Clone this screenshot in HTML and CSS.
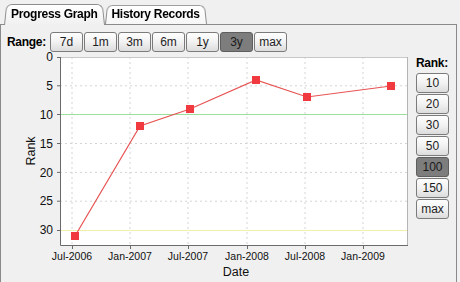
FILE: index.html
```html
<!DOCTYPE html>
<html lang="en">
<head>
  <meta charset="UTF-8">
  <title>Progress Graph</title>
  <link rel="stylesheet" href="styles.css">
</head>
<body>

  <div class="window">
    <!-- Tabs -->
    <div class="tabs">
      <div class="tab active">Progress Graph</div>
      <div class="tab">History Records</div>
    </div>

    <div class="panel">
      <!-- Range selector -->
      <div class="range-row">
        <span class="label">Range:</span>
        <div class="btn-group">
          <button class="btn">7d</button>
          <button class="btn">1m</button>
          <button class="btn">3m</button>
          <button class="btn">6m</button>
          <button class="btn">1y</button>
          <button class="btn on">3y</button>
          <button class="btn">max</button>
        </div>
      </div>

      <div class="main">
        <!-- Chart, drawn in page coordinates -->
        <svg class="chart" width="410" height="234" viewBox="1 48 410 234">
          <rect x="60" y="57" width="348" height="188" fill="#fff"/>

          <g class="grid">
            <line x1="60" y1="85.8" x2="408" y2="85.8"/>
            <line x1="60" y1="143.5" x2="408" y2="143.5"/>
            <line x1="60" y1="172.4" x2="408" y2="172.4"/>
            <line x1="60" y1="201.2" x2="408" y2="201.2"/>
            <line x1="72" y1="57" x2="72" y2="245"/>
            <line x1="130" y1="57" x2="130" y2="245"/>
            <line x1="188" y1="57" x2="188" y2="245"/>
            <line x1="247" y1="57" x2="247" y2="245"/>
            <line x1="305" y1="57" x2="305" y2="245"/>
            <line x1="363" y1="57" x2="363" y2="245"/>
          </g>

          <line x1="60" y1="114.5" x2="408" y2="114.5" stroke="#9be09b"/>
          <line x1="60" y1="230.5" x2="408" y2="230.5" stroke="#f2f0a6"/>

          <!-- frame -->
          <line x1="60" y1="57.5" x2="408" y2="57.5" stroke="#c8c8c8"/>
          <line x1="407.5" y1="57" x2="407.5" y2="245" stroke="#b4b4b4"/>
          <path d="M60.5 57 V245.5 H408" fill="none" stroke="#6a6a6a"/>

          <g class="ticks">
            <line x1="57" y1="57.5" x2="60" y2="57.5"/>
            <line x1="57" y1="85.8" x2="60" y2="85.8"/>
            <line x1="57" y1="114.5" x2="60" y2="114.5"/>
            <line x1="57" y1="143.5" x2="60" y2="143.5"/>
            <line x1="57" y1="172.4" x2="60" y2="172.4"/>
            <line x1="57" y1="201.2" x2="60" y2="201.2"/>
            <line x1="57" y1="230.5" x2="60" y2="230.5"/>
            <line x1="72.5" y1="245" x2="72.5" y2="249"/>
            <line x1="130.5" y1="245" x2="130.5" y2="249"/>
            <line x1="188.5" y1="245" x2="188.5" y2="249"/>
            <line x1="247.5" y1="245" x2="247.5" y2="249"/>
            <line x1="305.5" y1="245" x2="305.5" y2="249"/>
            <line x1="363.5" y1="245" x2="363.5" y2="249"/>
          </g>

          <g class="ylabels">
            <text x="53" y="61">0</text>
            <text x="53" y="90">5</text>
            <text x="53" y="119">10</text>
            <text x="53" y="148">15</text>
            <text x="53" y="177">20</text>
            <text x="53" y="205">25</text>
            <text x="53" y="234">30</text>
          </g>

          <g class="xlabels">
            <text x="72" y="260">Jul-2006</text>
            <text x="130" y="260">Jan-2007</text>
            <text x="188" y="260">Jul-2007</text>
            <text x="247" y="260">Jan-2008</text>
            <text x="305" y="260">Jul-2008</text>
            <text x="363" y="260">Jan-2009</text>
          </g>

          <text class="axis-title" x="236" y="276">Date</text>
          <text class="axis-title" x="0" y="0" transform="translate(35 151) rotate(-90)">Rank</text>

          <polyline class="series" points="75,236 140,126 190,109 256,80 307,97 391,86"/>
          <g class="markers">
            <rect x="71" y="232" width="8" height="8"/>
            <rect x="136" y="122" width="8" height="8"/>
            <rect x="186" y="105" width="8" height="8"/>
            <rect x="252" y="76" width="8" height="8"/>
            <rect x="303" y="93" width="8" height="8"/>
            <rect x="387" y="82" width="8" height="8"/>
          </g>
        </svg>

        <!-- Rank selector -->
        <div class="rank-col">
          <span class="label">Rank:</span>
          <button class="btn">10</button>
          <button class="btn">20</button>
          <button class="btn">30</button>
          <button class="btn">50</button>
          <button class="btn on">100</button>
          <button class="btn">150</button>
          <button class="btn">max</button>
        </div>
      </div>
    </div>
  </div>

</body>
</html>
```

FILE: styles.css
```css
body {
  margin: 0;
  width: 460px;
  height: 282px;
  overflow: hidden;
  background: #f0f0f0;
  font-family: "Liberation Sans", Arial, sans-serif;
}

.window {
  width: 457px;
}

/* Tabs */
.tabs {
  position: relative;
  z-index: 1;
  display: flex;
  align-items: flex-end;
  height: 24px;
  padding-left: 4px;
  box-sizing: border-box;
}

.tab {
  position: relative;
  z-index: 0;
  height: 20px;
  line-height: 21px;
  padding: 0 7px;
  font-size: 12px;
  font-weight: bold;
  letter-spacing: -0.3px;
  color: #000;
}

.tab::before {
  content: "";
  position: absolute;
  top: 0;
  left: 0;
  right: 0;
  bottom: 0;
  z-index: -1;
  border: 1px solid #8d8d8d;
  border-bottom: none;
  border-radius: 6px 6px 0 0;
  background: linear-gradient(#ffffff, #f6f6f6);
  transform: perspective(40px) rotateX(5deg);
  transform-origin: bottom;
}

.tab.active {
  z-index: 1;
  height: 22px;
  line-height: 23px;
  margin-bottom: -1px;
}

.tab.active::before {
  background: linear-gradient(#ffffff, #f0f0f0);
}

/* Panel */
.panel {
  height: 258px;
  box-sizing: border-box;
  border: 1px solid #8a8a8a;
  border-bottom: none;
  background: #f0f0f0;
}

.label {
  font-size: 12px;
  font-weight: bold;
  letter-spacing: -0.3px;
  color: #000;
}

.range-row {
  display: flex;
  align-items: center;
  height: 20px;
  margin-top: 7px;
  padding-left: 6px;
}

.range-row .label {
  width: 43px;
}

.btn-group {
  display: flex;
  gap: 1px;
}

.btn {
  display: flex;
  align-items: center;
  justify-content: center;
  box-sizing: border-box;
  width: 33px;
  height: 20px;
  padding: 0;
  border: 1px solid #7b7b7b;
  border-radius: 3px;
  background: linear-gradient(#fefefe, #f2f2f2 50%, #dcdcdc);
  font-family: "Liberation Sans", Arial, sans-serif;
  font-size: 12px;
  color: #1e1e1e;
}

.btn.on {
  background: #7d7d7d;
  border-color: #5e5e5e;
  color: #1a1a1a;
}

.main {
  display: flex;
  margin-top: -4px;
}

/* Chart */
.chart {
  display: block;
  font-family: "Liberation Sans", Arial, sans-serif;
}

.grid line {
  stroke: #d4d4d4;
  stroke-dasharray: 2 3;
}

.ticks line {
  stroke: #6a6a6a;
}

.ylabels text {
  font-size: 12px;
  text-anchor: end;
  fill: #111;
}

.xlabels text {
  font-size: 10.5px;
  text-anchor: middle;
  fill: #111;
}

.axis-title {
  font-size: 12.5px;
  text-anchor: middle;
  fill: #111;
}

.series {
  fill: none;
  stroke: #e85353;
  stroke-width: 1.2;
}

.markers rect {
  fill: #f03a3f;
}

/* Rank selector */
.rank-col {
  display: flex;
  flex-direction: column;
  gap: 1px;
  margin-left: 5px;
  padding-top: 7px;
}

.rank-col .label {
  line-height: 16px;
  margin-bottom: 1px;
}
```
